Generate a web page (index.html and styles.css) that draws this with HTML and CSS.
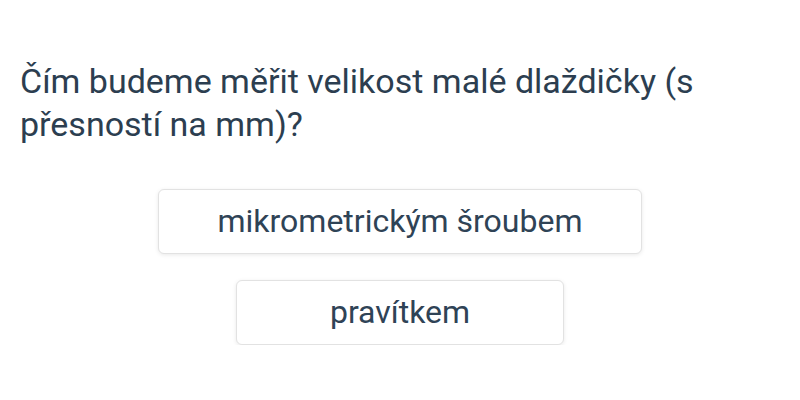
FILE: index.html
```html
<!DOCTYPE html>
<html lang="cs">
<head>
  <meta charset="UTF-8" />
  <title>Otázka</title>
  <link rel="stylesheet" href="styles.css">
</head>
<body>
  <div class="question">
    <h1 class="question-text">Čím budeme měřit velikost malé dlaždičky (s přesností na mm)?</h1>
    <div class="answers">
      <button class="answer">mikrometrickým šroubem</button>
      <button class="answer">pravítkem</button>
    </div>
  </div>
</body>
</html>
```

FILE: styles.css
```css
body {
  font-family: Roboto, 'Noto Sans', sans-serif;
  background: #fff;
  color: #2c3e50;
  margin: 0;
  padding: 0;
}

.question {
  padding: 60px 20px 0;
}

.question-text {
  font-size: 34px;
  font-weight: 400;
  line-height: 43px;
  margin: 0;
  color: #2c3e50;
}

.answers {
  display: flex;
  flex-direction: column;
  align-items: center;
  gap: 26px;
  margin-top: 43px;
}

.answer {
  box-sizing: border-box;
  min-width: 328px;
  font-family: inherit;
  font-size: 32px;
  line-height: 39px;
  color: #2f4356;
  background: #fff;
  border: 1px solid #e2e2e2;
  border-radius: 6px;
  box-shadow: 0 1px 4px rgba(0, 0, 0, 0.09);
  padding: 12px 58px;
  cursor: pointer;
}
```
